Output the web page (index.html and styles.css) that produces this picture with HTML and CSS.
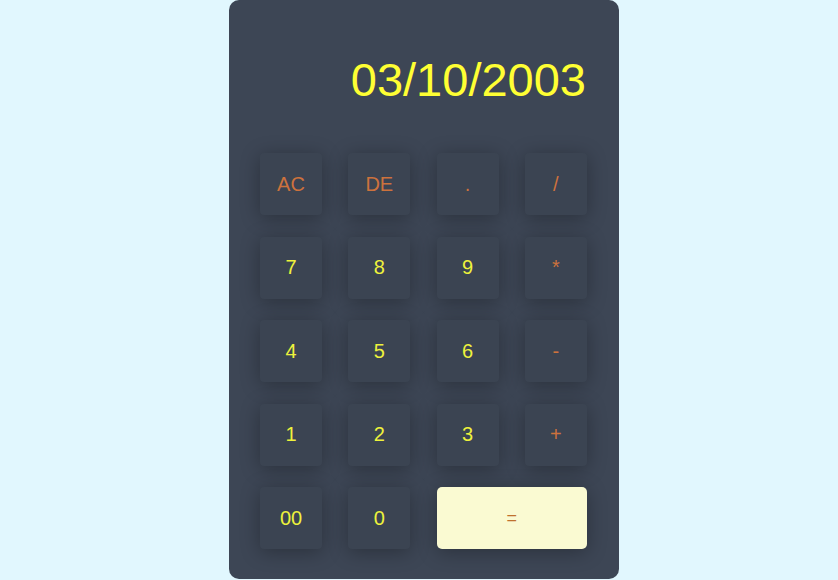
FILE: index.html
```html
<!DOCTYPE html>
<html lang="en">
<head>
<meta charset="utf-8">
<title>Calculator</title>
<link rel="stylesheet" href="styles.css">
</head>
<body>
<div class="calc">
  <div class="display">03/10/2003</div>
  <div class="keys">
    <button class="key op">AC</button>
    <button class="key op">DE</button>
    <button class="key op">.</button>
    <button class="key op">/</button>
    <button class="key">7</button>
    <button class="key">8</button>
    <button class="key">9</button>
    <button class="key op">*</button>
    <button class="key">4</button>
    <button class="key">5</button>
    <button class="key">6</button>
    <button class="key op">-</button>
    <button class="key">1</button>
    <button class="key">2</button>
    <button class="key">3</button>
    <button class="key op">+</button>
    <button class="key">00</button>
    <button class="key">0</button>
    <button class="key equal">=</button>
  </div>
</div>
</body>
</html>
```

FILE: styles.css
```css
html, body {
  margin: 0;
  padding: 0;
}
body {
  background: #e1f7fe;
  font-family: "Liberation Sans", Arial, sans-serif;
  height: 580px;
  overflow: hidden;
}
.calc {
  width: 390px;
  height: 579px;
  margin-left: 229px;
  background: #3d4655;
  border-radius: 10px;
  box-sizing: border-box;
  padding: 0 31px;
}
.display {
  text-align: right;
  color: #ffff33;
  font-size: 47px;
  line-height: 53px;
  padding-top: 53px;
  padding-right: 2px;
  height: 153px;
  box-sizing: border-box;
}
.keys {
  display: grid;
  grid-template-columns: repeat(4, 62px);
  grid-auto-rows: 62px;
  column-gap: 26.3px;
  row-gap: 21.5px;
}
.key {
  border: none;
  margin: 0;
  padding: 0;
  background: #3b4452;
  border-radius: 4px;
  box-shadow: 0 3px 20px rgba(0, 0, 0, 0.3);
  color: #eef23c;
  font-family: "Liberation Sans", Arial, sans-serif;
  font-size: 20px;
}
.key.op {
  color: #cd723d;
}
.key.equal {
  grid-column: span 2;
  background: #fafad2;
  color: #c0712e;
  border-radius: 5px;
  font-size: 18px;
}
```
